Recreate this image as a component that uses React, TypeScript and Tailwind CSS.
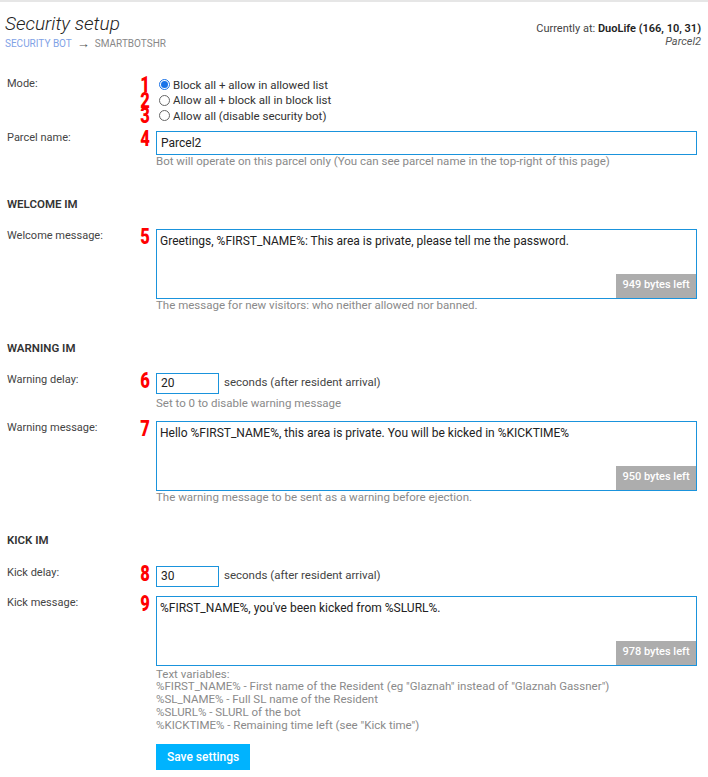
import React from "react";

const font = { fontFamily: "Roboto, 'Liberation Sans', sans-serif" };

function Num({ n }: { n: number }) {
  return (
    <div className="flex w-[15px] shrink-0 justify-end">
      <span
        className="inline-block origin-right scale-x-[0.75] text-[22px] leading-[15px] font-black text-[#ff0000]"
        style={{ fontFamily: "Roboto, 'DejaVu Sans', sans-serif" }}
      >
        {n}
      </span>
    </div>
  );
}

function Label({ children }: { children: React.ReactNode }) {
  return <div className="w-[128px] shrink-0 text-[11px] leading-[14px] text-[#444]">{children}</div>;
}

function Row({
  label,
  n,
  children,
  className = "",
}: {
  label: string;
  n: number;
  children: React.ReactNode;
  className?: string;
}) {
  return (
    <div className={"flex " + className}>
      <Label>{label}</Label>
      <Num n={n} />
      <div className="ml-[6px] flex-1 min-w-0">{children}</div>
    </div>
  );
}

function Help({ children, className = "" }: { children: React.ReactNode; className?: string }) {
  return <div className={"text-[11.5px] leading-[13px] text-[#8a8a8a] " + className}>{children}</div>;
}

function Heading({ children, className = "" }: { children: React.ReactNode; className?: string }) {
  return (
    <div className={"text-[11.5px] leading-[14px] font-semibold uppercase text-[#333] " + className}>
      {children}
    </div>
  );
}

function MessageBox({ value, left }: { value: string; left: number }) {
  return (
    <div className="relative h-[70px]">
      <textarea
        readOnly
        defaultValue={value}
        className="block h-full w-full resize-none border border-[#1a93dc] px-[3px] py-[4px] text-[12px] leading-[14px] text-[#222] outline-none"
        style={font}
      />
      <div className="absolute bottom-[1px] right-[1px] flex h-[24px] w-[80px] items-center justify-center bg-[#adadad] text-[11px] font-medium text-white">
        {left} bytes left
      </div>
    </div>
  );
}

function DelayInput({ value }: { value: string }) {
  return (
    <div className="flex items-center">
      <input
        readOnly
        defaultValue={value}
        className="h-[21px] w-[63px] border border-[#1a93dc] px-[4px] text-[12px] text-[#222] outline-none"
        style={font}
      />
      <span className="ml-[5px] text-[11.5px] text-[#444]">seconds (after resident arrival)</span>
    </div>
  );
}

function Radio({ checked, label, n }: { checked?: boolean; label: string; n: number }) {
  return (
    <div className="flex h-[15.5px] items-center">
      <Num n={n} />
      <label className="ml-[9px] flex items-center">
        <span
          className={
            "flex h-[11px] w-[11px] items-center justify-center rounded-full border bg-white " +
            (checked ? "border-[#1a73e8]" : "border-[#666]")
          }
        >
          {checked && <span className="h-[7px] w-[7px] rounded-full bg-[#1a73e8]" />}
        </span>
        <span className="ml-[3px] text-[11.5px] leading-[14px] text-[#333]">{label}</span>
      </label>
    </div>
  );
}

export default function App() {
  return (
    <div className="min-h-[777px] w-[708px] bg-white" style={font}>
      <div className="h-[2px] bg-[#e6e6e6]" />

      <div className="flex justify-between pl-[5px] pr-[7px] pt-[9px]">
        <div>
          <div className="text-[19px] leading-[26px] font-light italic text-[#222]">Security setup</div>
          <div className="mt-[1px] flex items-center text-[10px] leading-[12px] uppercase">
            <span className="text-[#7fa2e6]">Security bot</span>
            <span className="mx-[5px] text-[13px] leading-[12px] text-[#555]">→</span>
            <span className="text-[#888]">SmartbotsHR</span>
          </div>
        </div>
        <div className="pt-[11px] text-right text-[11px] leading-[13px] text-[#444]">
          <div>
            Currently at: <b className="font-semibold text-[#222]">DuoLife (166, 10, 31)</b>
          </div>
          <div className="italic text-[#555]">Parcel2</div>
        </div>
      </div>

      <div className="pl-[7px] pr-[11px]">
        <div className="mt-[27px] flex">
          <Label>Mode:</Label>
          <div>
            <Radio n={1} checked label="Block all + allow in allowed list" />
            <Radio n={2} label="Allow all + block all in block list" />
            <Radio n={3} label="Allow all (disable security bot)" />
          </div>
        </div>

        <Row label="Parcel name:" n={4} className="mt-[7px]">
          <input
            readOnly
            defaultValue="Parcel2"
            className="block h-[24px] w-full border border-[#1a93dc] px-[4px] text-[12px] text-[#222] outline-none"
            style={font}
          />
          <Help>Bot will operate on this parcel only (You can see parcel name in the top-right of this page)</Help>
        </Row>

        <Heading className="mt-[29px]">Welcome IM</Heading>

        <Row label="Welcome message:" n={5} className="mt-[18px]">
          <MessageBox value="Greetings, %FIRST_NAME%: This area is private, please tell me the password." left={949} />
          <Help>The message for new visitors: who neither allowed nor banned.</Help>
        </Row>

        <Heading className="mt-[29px]">Warning IM</Heading>

        <Row label="Warning delay:" n={6} className="mt-[18px]">
          <DelayInput value="20" />
          <Help className="mt-[3px]">Set to 0 to disable warning message</Help>
        </Row>

        <Row label="Warning message:" n={7} className="mt-[11px]">
          <MessageBox value="Hello %FIRST_NAME%, this area is private. You will be kicked in %KICKTIME%" left={950} />
          <Help>The warning message to be sent as a warning before ejection.</Help>
        </Row>

        <Heading className="mt-[29px]">Kick IM</Heading>

        <Row label="Kick delay:" n={8} className="mt-[19px]">
          <DelayInput value="30" />
        </Row>

        <Row label="Kick message:" n={9} className="mt-[9px]">
          <MessageBox value="%FIRST_NAME%, you've been kicked from %SLURL%." left={978} />
          <div className="mt-[2px] text-[11.5px] leading-[12.75px] text-[#8a8a8a]">
            <div>Text variables:</div>
            <div>%FIRST_NAME% - First name of the Resident (eg "Glaznah" instead of "Glaznah Gassner")</div>
            <div>%SL_NAME% - Full SL name of the Resident</div>
            <div>%SLURL% - SLURL of the bot</div>
            <div>%KICKTIME% - Remaining time left (see "Kick time")</div>
          </div>
          <button className="mt-[13px] h-[26px] w-[94px] bg-[#00b3fe] text-[12px] font-medium text-white">
            Save settings
          </button>
        </Row>
      </div>
    </div>
  );
}
